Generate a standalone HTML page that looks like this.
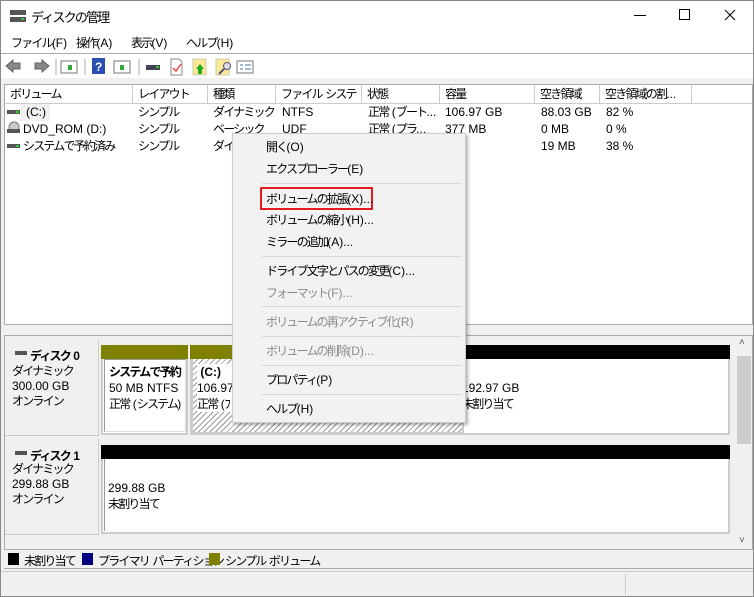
<!DOCTYPE html>
<html><head><meta charset="utf-8"><style>
*{margin:0;padding:0;box-sizing:border-box}
body{width:754px;height:597px;overflow:hidden;background:#f0f0f0;font-family:"Liberation Sans","Noto Sans CJK JP",sans-serif;font-size:12px;color:#000;position:relative;letter-spacing:-1.8px}
.n{letter-spacing:0}
.a{position:absolute;white-space:nowrap}
.win{position:absolute;left:0;top:0;width:754px;height:597px;border:1px solid #888}
.hd{position:absolute;top:85px;height:19px;background:#fff;border-right:1px solid #ccc;border-bottom:1px solid #ccc;padding-left:5px;line-height:18px;overflow:hidden}
.row{position:absolute;left:0;height:17px;line-height:17px}
.mi{position:absolute;left:266px;line-height:16px}
.dis{color:#8a8a8a}
.sep{position:absolute;left:262px;width:200px;height:1px;background:#d7d7d7}
.hatch{background:repeating-linear-gradient(135deg,#fff 0 3px,#999 3px 4px)}
</style></head><body>
<div class="win"></div>
<div class="a" style="left:1px;top:1px;width:752px;height:52px;background:#fff"></div>
<svg class="a" style="left:9px;top:8px" width="18" height="16"><rect x="1" y="2" width="16" height="5" fill="#555"/><rect x="1" y="9" width="16" height="5" fill="#555"/><rect x="12" y="10" width="3" height="2" fill="#3c3"/></svg>
<div class="a" style="left:31px;top:7px;font-size:13px">ディスクの管理</div>
<div class="a" style="left:634px;top:15px;width:12px;height:1px;background:#000"></div>
<div class="a" style="left:679px;top:9px;width:11px;height:11px;border:1px solid #000"></div>
<svg class="a" style="left:724px;top:9px" width="12" height="12"><path d="M1 1L11 11M11 1L1 11" stroke="#000" stroke-width="1"/></svg>
<div class="a" style="left:11px;top:34px">ファイル<span class="n">(F)</span></div>
<div class="a" style="left:76px;top:34px">操作<span class="n">(A)</span></div>
<div class="a" style="left:131px;top:34px">表示<span class="n">(V)</span></div>
<div class="a" style="left:186px;top:34px">ヘルプ<span class="n">(H)</span></div>
<div class="a" style="left:1px;top:53px;width:752px;height:1px;background:#aaa"></div>
<div class="a" style="left:1px;top:54px;width:752px;height:24px;background:#fff"></div>
<svg class="a" style="left:5px;top:58px" width="250" height="18">
<path d="M1 8L8 2V5H15V11H8V14Z" fill="#888" stroke="#666"/><path d="M44 8L37 2V5H30V11H37V14Z" fill="#888" stroke="#666"/>
<line x1="51" y1="1" x2="51" y2="17" stroke="#aaa"/>
<rect x="56" y="3" width="16" height="12" fill="#fff" stroke="#777"/><rect x="63" y="7" width="4" height="5" fill="#3a3"/>
<line x1="80" y1="1" x2="80" y2="17" stroke="#aaa"/>
<rect x="87" y="0" width="13" height="16" fill="#2a4fb0"/><text x="90" y="13" fill="#fff" font-size="12" font-weight="bold" font-family="Liberation Sans">?</text>
<rect x="109" y="3" width="16" height="12" fill="#fff" stroke="#777"/><rect x="115" y="7" width="4" height="5" fill="#3a3"/>
<line x1="134" y1="1" x2="134" y2="17" stroke="#aaa"/>
<rect x="141" y="7" width="14" height="5" fill="#445"/><rect x="151" y="8" width="3" height="2" fill="#3c3"/>
<path d="M166 1H174L177 4V17H166Z" fill="#fff" stroke="#888"/><path d="M168 10L171 13L176 6" stroke="#e44" fill="none" stroke-width="1.5"/>
<rect x="188" y="1" width="13" height="16" fill="#fde89a" stroke="#cca"/><path d="M195 6L199 11H197V16H193V11H191Z" fill="#2a2"/>
<rect x="211" y="1" width="13" height="16" fill="#fde89a" stroke="#cca"/><circle cx="222" cy="8" r="3.5" fill="#dde" stroke="#557"/><line x1="219" y1="11" x2="214" y2="16" stroke="#557" stroke-width="2"/>
<rect x="232" y="3" width="16" height="12" fill="#fff" stroke="#777"/><path d="M235 7h3M240 7h6M235 11h3M240 11h6" stroke="#47a"/>
</svg>
<div class="a" style="left:4px;top:84px;width:749px;height:241px;background:#fff;border:1px solid #aaa"></div>
<div class="hd" style="left:5px;width:128px">ボリューム</div>
<div class="hd" style="left:133px;width:75px">レイアウト</div>
<div class="hd" style="left:208px;width:68px">種類</div>
<div class="hd" style="left:276px;width:86px">ファイル<span class="n"> </span>システム</div>
<div class="hd" style="left:362px;width:78px">状態</div>
<div class="hd" style="left:440px;width:95px">容量</div>
<div class="hd" style="left:535px;width:65px">空き領域</div>
<div class="hd" style="left:600px;width:92px">空き領域の割<span class="n">...</span></div>
<div class="hd" style="left:692px;width:60px;border-right:none"></div>
<svg class="a" style="left:6px;top:106px" width="16" height="50"><rect x="1" y="4" width="13" height="4" fill="#555"/><rect x="10" y="5" width="3" height="2" fill="#3c3"/><circle cx="8" cy="21" r="5" fill="#ccc" stroke="#777"/><rect x="1" y="23" width="13" height="4" fill="#555"/><rect x="1" y="38" width="13" height="4" fill="#555"/><rect x="10" y="39" width="3" height="2" fill="#3c3"/></svg>
<div class="a" style="left:21px;top:104px;width:29px;height:17px;background:#f0f0f0"></div>
<div class="row" style="top:104px"><span class="a n" style="left:26px">(C:)</span><span class="a" style="left:138px">シンプル</span><span class="a" style="left:213px">ダイナミック</span><span class="a n" style="left:282px">NTFS</span><span class="a" style="left:368px">正常<span class="n"> (</span>ブート<span class="n">...</span></span><span class="a n" style="left:445px">106.97 GB</span><span class="a n" style="left:541px">88.03 GB</span><span class="a n" style="left:606px">82 %</span></div>
<div class="row" style="top:121px"><span class="a n" style="left:23px">DVD_ROM (D:)</span><span class="a" style="left:138px">シンプル</span><span class="a" style="left:213px">ベーシック</span><span class="a n" style="left:282px">UDF</span><span class="a" style="left:368px">正常<span class="n"> (</span>プラ<span class="n">...</span></span><span class="a n" style="left:445px">377 MB</span><span class="a n" style="left:541px">0 MB</span><span class="a n" style="left:606px">0 %</span></div>
<div class="row" style="top:138px"><span class="a" style="left:23px">システムで予約済み</span><span class="a" style="left:138px">シンプル</span><span class="a" style="left:213px">ダイ</span><span class="a n" style="left:445px">MB</span><span class="a n" style="left:541px">19 MB</span><span class="a n" style="left:606px">38 %</span></div>
<div class="a" style="left:4px;top:335px;width:749px;height:215px;background:#f0f0f0;border:1px solid #aaa"></div>
<div class="a" style="left:736px;top:336px;width:16px;height:213px;background:#f0f0f0"></div>
<div class="a" style="left:737px;top:356px;width:14px;height:88px;background:#cdcdcd"></div>
<div class="a n" style="left:739px;top:337px;font-size:10px;color:#555">&#x2c4;</div>
<div class="a n" style="left:739px;top:535px;font-size:10px;color:#555">&#x2c5;</div>
<div class="a" style="left:5px;top:340px;width:94px;height:96px;border-right:1px solid #ccc;border-bottom:1px solid #ccc"></div>
<div class="a" style="left:15px;top:351px;width:12px;height:4px;background:#555"></div>
<div class="a" style="left:30px;top:347px;font-weight:bold">ディスク<span class="n"> 0</span></div>
<div class="a" style="left:12px;top:364px;line-height:15px">ダイナミック<br><span class="n">300.00 GB</span><br>オンライン</div>
<div class="a" style="left:101px;top:345px;width:87px;height:14px;background:#808000"></div>
<div class="a" style="left:190px;top:345px;width:275px;height:14px;background:#808000"></div>
<div class="a" style="left:462px;top:345px;width:268px;height:14px;background:#000"></div>
<div class="a" style="left:101px;top:359px;width:87px;height:76px;background:#fff;border:2px solid #ccc;border-top:none"></div>
<div class="a" style="left:104px;top:359px;width:82px;height:73px;border:1px solid #999;border-right-color:#ddd;border-bottom-color:#ddd"></div>
<div class="a" style="left:109px;top:364px;line-height:16px"><b>システムで予約</b><br><span class="n">50 MB NTFS</span><br>正常<span class="n"> (</span>システム<span class="n">)</span></div>
<div class="a hatch" style="left:190px;top:359px;width:275px;height:76px;border:3px solid #ccc;border-top:none"></div>
<div class="a" style="left:197px;top:364px;line-height:16px;background:#fff"><b class="n">&nbsp;(C:)</b><br><span class="n">106.97</span><br>正常<span class="n"> (</span>ﾌ</div>
<div class="a" style="left:462px;top:359px;width:268px;height:76px;background:#fff;border:2px solid #ccc;border-top:none"></div>
<div class="a" style="left:462px;top:380px;line-height:16px"><span class="n">192.97 GB</span><br>未割り当て</div>
<div class="a" style="left:5px;top:439px;width:94px;height:96px;border-right:1px solid #ccc;border-bottom:1px solid #ccc"></div>
<div class="a" style="left:15px;top:451px;width:12px;height:4px;background:#555"></div>
<div class="a" style="left:30px;top:447px;font-weight:bold">ディスク<span class="n"> 1</span></div>
<div class="a" style="left:12px;top:462px;line-height:15px">ダイナミック<br><span class="n">299.88 GB</span><br>オンライン</div>
<div class="a" style="left:101px;top:445px;width:629px;height:14px;background:#000"></div>
<div class="a" style="left:101px;top:459px;width:629px;height:75px;background:#fff;border:2px solid #ccc;border-top:none"></div>
<div class="a" style="left:104px;top:459px;width:3px;height:72px;border-left:1px solid #999"></div>
<div class="a" style="left:108px;top:480px;line-height:16px"><span class="n">299.88 GB</span><br>未割り当て</div>
<div class="a" style="left:4px;top:550px;width:749px;height:19px;border-bottom:1px solid #aaa"></div>
<div class="a" style="left:8px;top:553px;width:11px;height:12px;background:#000"></div>
<div class="a" style="left:24px;top:552px">未割り当て</div>
<div class="a" style="left:82px;top:553px;width:11px;height:12px;background:#000080"></div>
<div class="a" style="left:98px;top:552px">プライマリ<span class="n"> </span>パーティション</div>
<div class="a" style="left:209px;top:553px;width:11px;height:12px;background:#808000"></div>
<div class="a" style="left:225px;top:552px">シンプル<span class="n"> </span>ボリューム</div>
<div class="a" style="left:1px;top:571px;width:752px;height:1px;background:#ccc"></div>
<div class="a" style="left:625px;top:574px;width:1px;height:20px;background:#ccc"></div>
<div class="a" style="left:232px;top:133px;width:234px;height:290px;background:#f2f2f2;border:1px solid #ccc;box-shadow:2px 2px 3px rgba(0,0,0,.3)"></div>
<div class="mi" style="top:139px">開く<span class="n">(O)</span></div>
<div class="mi" style="top:161px">エクスプローラー<span class="n">(E)</span></div>
<div class="sep" style="top:183px"></div>
<div class="a" style="left:260px;top:187px;width:113px;height:23px;border:2px solid #e31b23"></div>
<div class="mi" style="top:191px">ボリュームの拡張<span class="n">(X)...</span></div>
<div class="mi" style="top:212px">ボリュームの縮小<span class="n">(H)...</span></div>
<div class="mi" style="top:234px">ミラーの追加<span class="n">(A)...</span></div>
<div class="sep" style="top:256px"></div>
<div class="mi" style="top:263px">ドライブ文字とパスの変更<span class="n">(C)...</span></div>
<div class="mi dis" style="top:285px">フォーマット<span class="n">(F)...</span></div>
<div class="sep" style="top:306px"></div>
<div class="mi dis" style="top:314px">ボリュームの再アクティブ化<span class="n">(R)</span></div>
<div class="sep" style="top:336px"></div>
<div class="mi dis" style="top:343px">ボリュームの削除<span class="n">(D)...</span></div>
<div class="sep" style="top:365px"></div>
<div class="mi" style="top:372px">プロパティ<span class="n">(P)</span></div>
<div class="sep" style="top:394px"></div>
<div class="mi" style="top:401px">ヘルプ<span class="n">(H)</span></div>
</body></html>
